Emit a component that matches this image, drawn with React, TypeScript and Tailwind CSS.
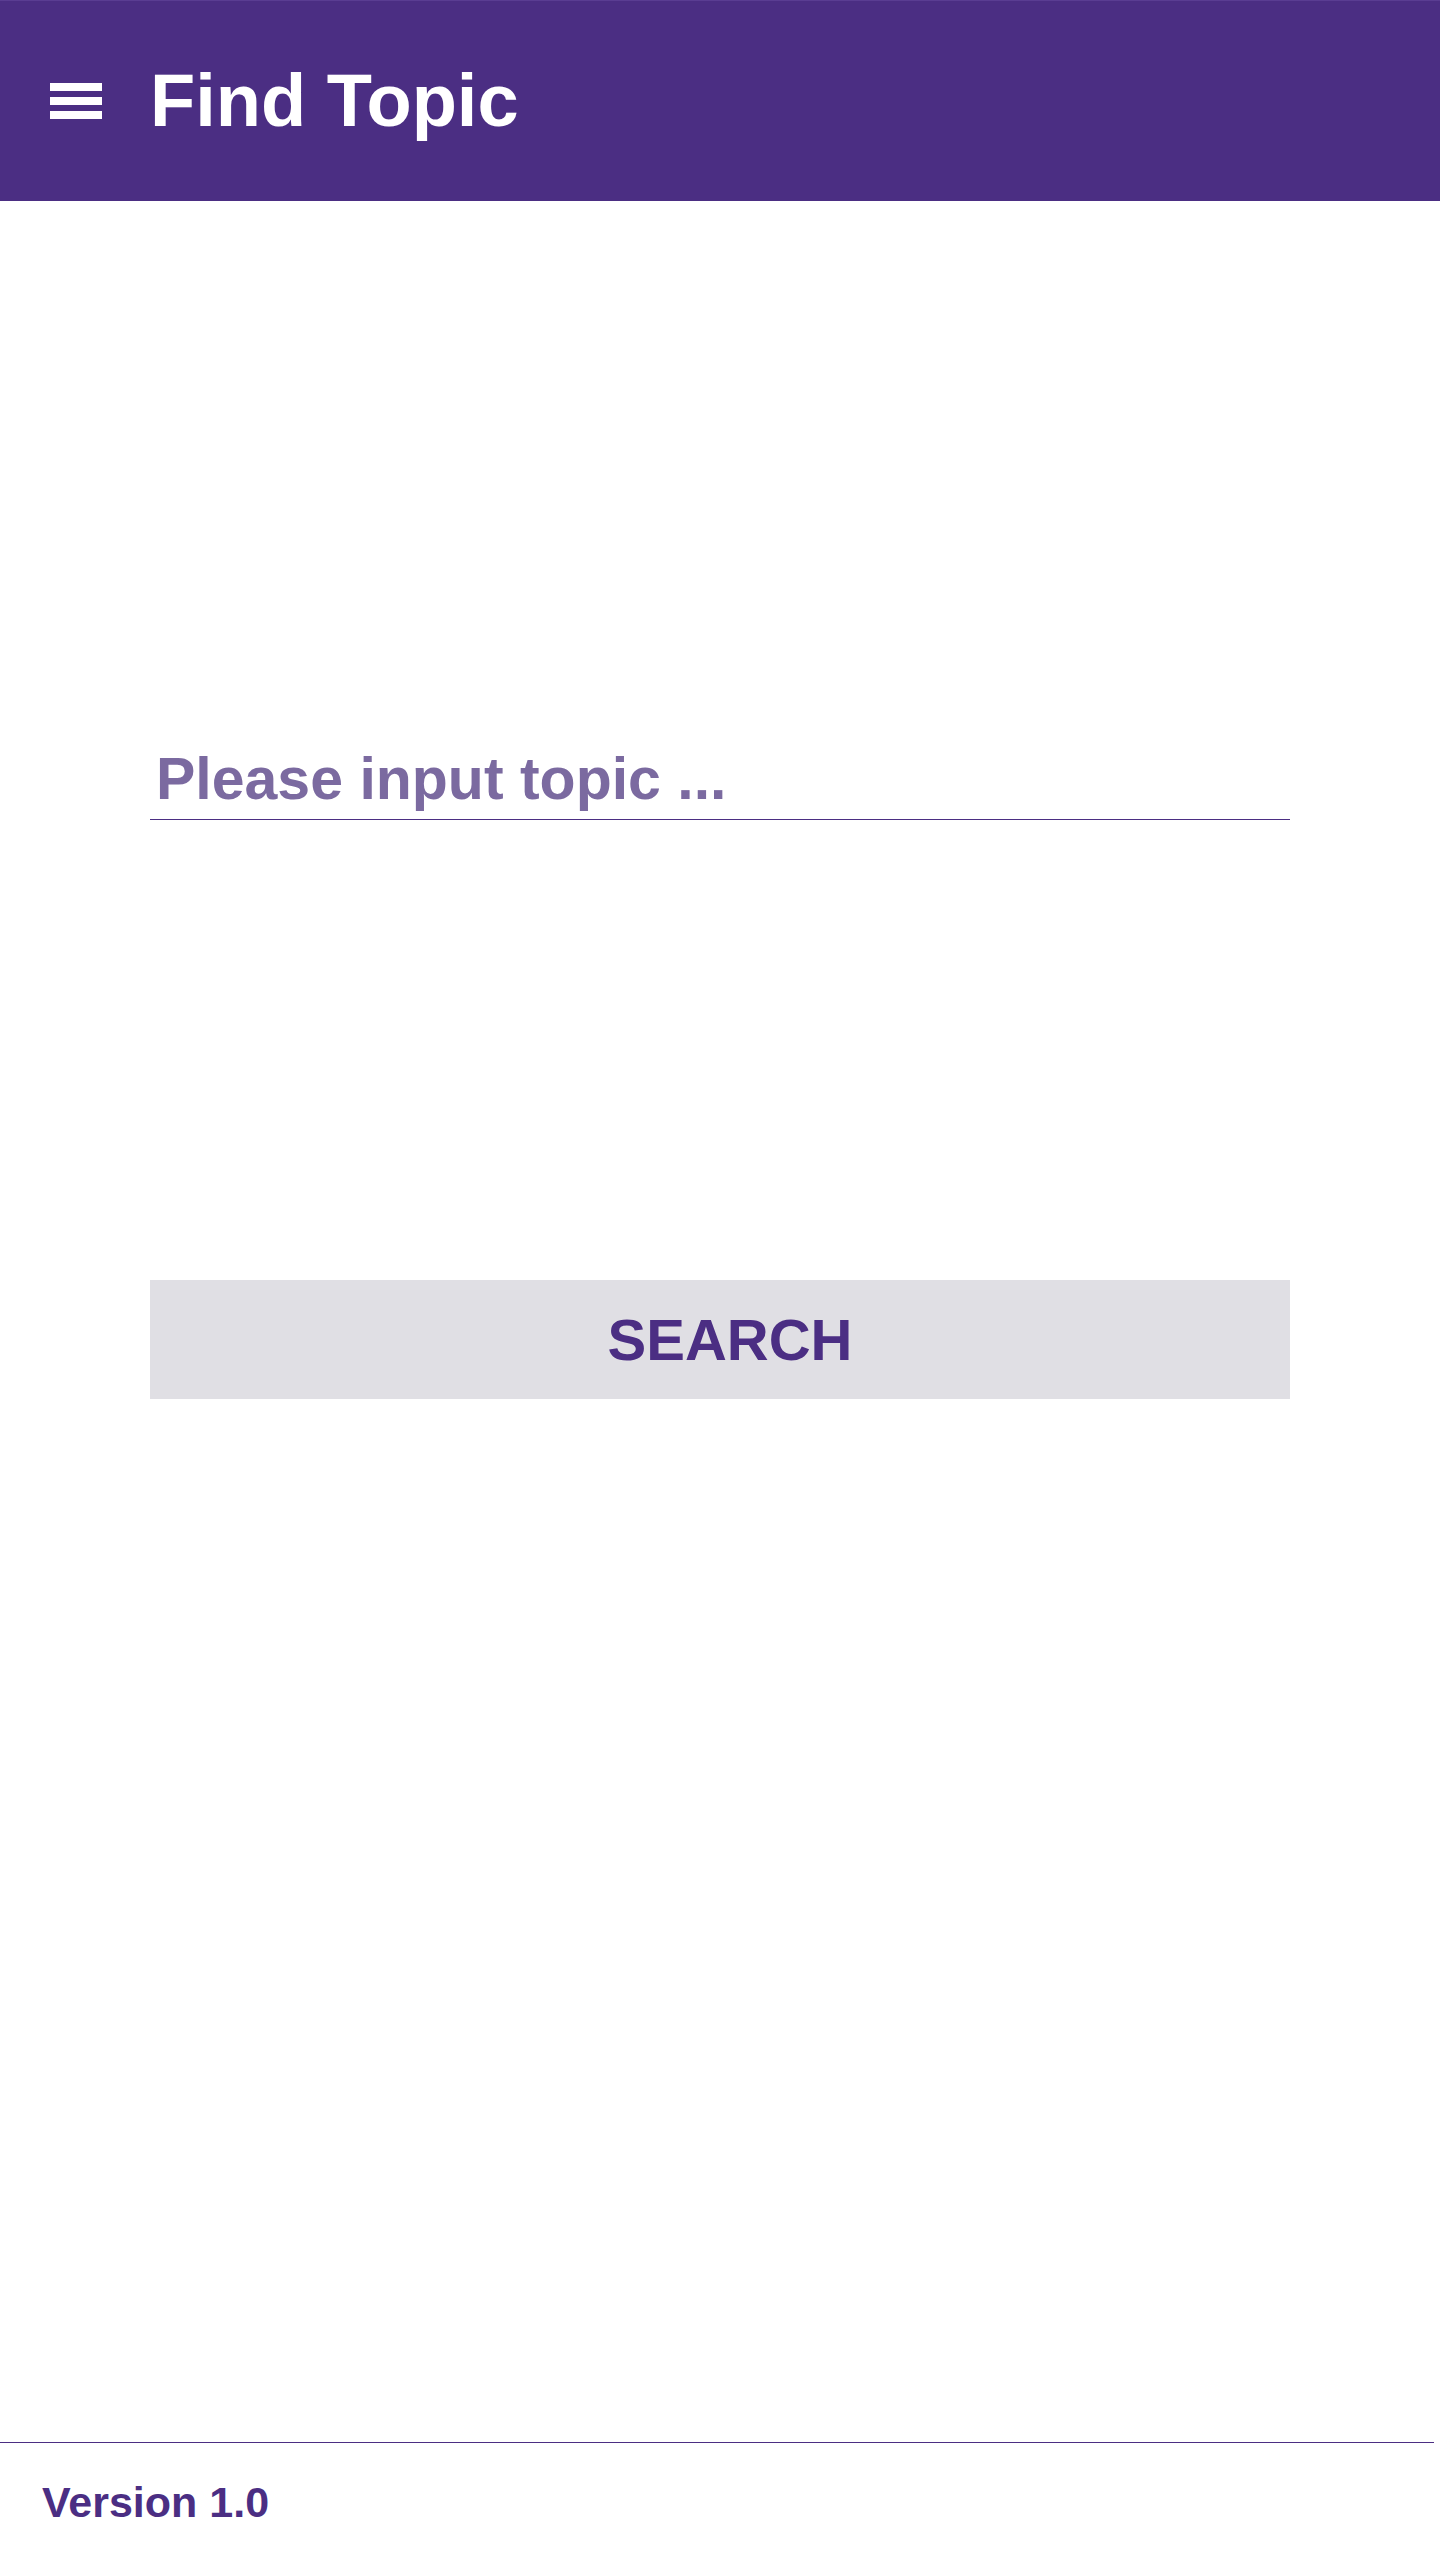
import React from "react";

export default function App() {
  return (
    <div
      className="min-h-[2560px] w-[1440px] bg-white flex flex-col"
      style={{ fontFamily: '"Liberation Sans", Arial, sans-serif' }}
    >
      <header className="h-[201px] bg-[#4b2e83] border-t border-[#5a3d92] flex items-center">
        <button className="ml-[50px] w-[52px] h-[36px] flex flex-col justify-between" aria-label="menu">
          <span className="block h-[8px] w-full bg-white" />
          <span className="block h-[8px] w-full bg-white" />
          <span className="block h-[8px] w-full bg-white" />
        </button>
        <h1 className="ml-[48px] text-white font-bold text-[74px] leading-none">Find Topic</h1>
      </header>

      <main className="flex flex-col items-start px-[150px]">
        <input
          type="text"
          placeholder="Please input topic ..."
          className="mt-[538px] w-[1140px] h-[81px] pl-[6px] border-b border-[#4b2e83] outline-none text-[59px] font-bold text-[#4b2e83] placeholder:text-[#7b6aa0] bg-transparent"
        />
        <button className="mt-[460px] w-[1140px] h-[119px] pl-[20px] bg-[#e0dfe4] text-[#4b2e83] font-bold text-[58px] leading-none">
          SEARCH
        </button>
      </main>

      <footer className="mt-auto h-[118px] w-[1434px] border-t border-[#4b2e83] pt-[27px] pl-[42px]">
        <span className="text-[43px] font-bold text-[#4b2e83]">Version 1.0</span>
      </footer>
    </div>
  );
}
